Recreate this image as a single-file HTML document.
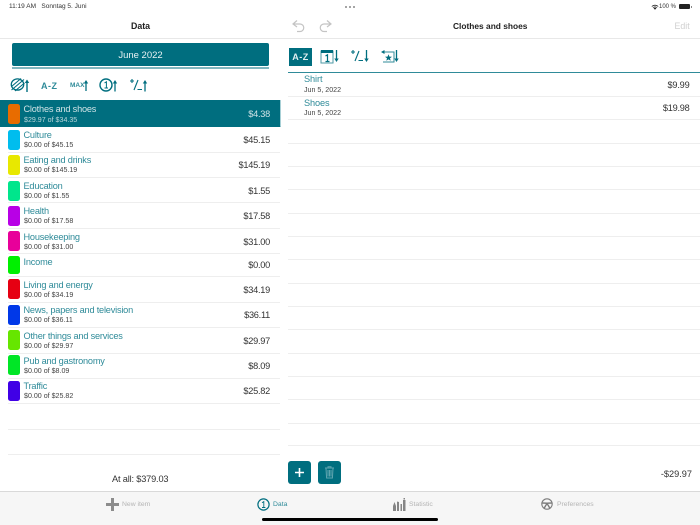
<!DOCTYPE html>
<html><head><meta charset="utf-8"><style>
html,body{margin:0;padding:0}
body{width:700px;height:525px;overflow:hidden;background:#fff;position:relative;font-family:"Liberation Sans",sans-serif;color:#333;filter:blur(.25px)}
.a{position:absolute;white-space:nowrap}
.l{position:absolute;height:1px;background:#eeeeee}
.sw{position:absolute;left:8px;width:12px;border-radius:2.5px}
.t{position:absolute;left:23.5px;font-size:9.2px;letter-spacing:-.2px;color:#2f8b99;white-space:nowrap;line-height:12px}
.s{position:absolute;left:24px;font-size:7.1px;color:#444;white-space:nowrap;line-height:9px}
.v{position:absolute;right:430px;font-size:9.2px;letter-spacing:-.25px;color:#333;white-space:nowrap;line-height:12px}
svg{position:absolute;overflow:visible}
</style></head><body>

<div class="a" style="left:9px;top:3px;font-size:6.5px;line-height:8px;color:#333">11:19 AM&nbsp;&nbsp; Sonntag 5. Juni</div>
<div class="a" style="left:345px;top:6px;width:2px;height:2px;background:#888;border-radius:50%;box-shadow:4px 0 #888,8px 0 #888"></div>
<svg style="left:650px;top:3px" width="10" height="8" viewBox="0 0 10 8"><path d="M5 6.8L3.6 5.3A2 2 0 0 1 6.4 5.3ZM2.7 4.4A3.4 3.4 0 0 1 7.3 4.4L6.8 4.9A2.8 2.8 0 0 0 3.2 4.9ZM1.5 3.2A5 5 0 0 1 8.5 3.2L7.9 3.8A4.2 4.2 0 0 0 2.1 3.8Z" fill="#222"/></svg>
<div class="a" style="left:659px;top:3px;font-size:6px;line-height:8px;color:#333">100 %</div>
<div class="a" style="left:679px;top:4px;width:11px;height:5px;background:#222;border-radius:1px"></div>
<div class="a" style="left:690.5px;top:5.5px;width:1px;height:2px;background:#888"></div>

<div class="a" style="left:131px;top:20px;font-size:8.8px;font-weight:bold;line-height:12px;color:#222">Data</div>
<div class="a" style="left:453px;top:20px;font-size:8.4px;font-weight:bold;line-height:12px;color:#222">Clothes and shoes</div>
<div class="a" style="left:674.5px;top:20px;font-size:8.8px;line-height:12px;color:#d0d0d0">Edit</div>
<svg style="left:291px;top:19px" width="14" height="14" viewBox="0 0 14 14" fill="none" stroke="#c4c4c4" stroke-width="1.2"><path d="M6 1.5L2 5L6 8M2 5H9A3.6 3.6 0 0 1 9 12.5H6"/></svg>
<svg style="left:319px;top:19px" width="14" height="14" viewBox="0 0 14 14" fill="none" stroke="#c4c4c4" stroke-width="1.2"><path d="M8 1.5L12 5L8 8M12 5H5A3.6 3.6 0 0 0 5 12.5H8"/></svg>
<div class="l" style="left:0;top:38px;width:700px;background:#e8e8e8"></div>

<div class="a" style="left:12px;top:43px;width:257px;height:23px;background:#006e7f;border-radius:2px;color:#e8f2f3;font-size:9.5px;line-height:25px;text-align:center">June 2022</div>
<div class="a" style="left:12px;top:66.5px;width:257px;height:2px;background:#7fb6bf"></div>

<svg style="left:10px;top:77px" width="20" height="16" viewBox="0 0 20 16" fill="none" stroke="#006e7f"><ellipse cx="7.5" cy="7.5" rx="6.2" ry="5.6" stroke-width="1.3"/><path d="M1.5 13L14 2.5M1.5 9.5L11 1.5M5 14L14.5 6" stroke-width="1.1"/><path d="M17 15V3.5" stroke-width="1.4"/><path d="M14.8 6L17 2.5L19.2 6Z" fill="#006e7f" stroke="none"/></svg>
<div class="a" style="left:41px;top:79.5px;font-size:9px;font-weight:bold;line-height:12px;color:#2f8b99;letter-spacing:.5px">A-Z</div>
<div class="a" style="left:70px;top:81.5px;font-size:6.5px;font-weight:bold;line-height:8px;color:#2f8b99">MAX</div>
<svg style="left:83px;top:79px" width="7" height="12" viewBox="0 0 7 12" stroke="#006e7f" fill="#006e7f"><path d="M3 12V3" stroke-width="1.3"/><path d="M.8 4.5L3 1L5.2 4.5Z" stroke="none"/></svg>
<svg style="left:99px;top:78px" width="21" height="14" viewBox="0 0 21 14" fill="none" stroke="#006e7f"><circle cx="7" cy="7" r="6" stroke-width="1.4"/><path d="M5.5 5L7.4 3.8V10M5.5 10H9" stroke-width="1"/><path d="M16 13.5V3.5" stroke-width="1.3"/><path d="M13.8 5.5L16 2L18.2 5.5Z" fill="#006e7f" stroke="none"/></svg>
<svg style="left:129px;top:78px" width="20" height="14" viewBox="0 0 20 14" fill="none" stroke="#006e7f" stroke-width="1.1"><path d="M1 3H5M3 1V5M5 12L9 2M8.5 11.5H13"/><path d="M16 13.5V3.5" stroke-width="1.3"/><path d="M13.8 5.5L16 2L18.2 5.5Z" fill="#006e7f" stroke="none"/></svg>

<div class="a" style="left:0;top:100px;width:280px;height:27px;background:#006e7f"></div>
<div class="a" style="left:280px;top:100px;width:1px;height:27px;background:#8fc0c8"></div>

<div class="sw" style="top:104px;height:20px;background:#e86c00"></div>
<div class="t" style="top:103px;color:#cfe3e6">Clothes and shoes</div>
<div class="s" style="top:115.5px;color:#b9d6da">$29.97 of $34.35</div>
<div class="v" style="top:108px;color:#cfe3e6">$4.38</div>

<div class="sw" style="top:129.5px;height:20px;background:#00bdee"></div>
<div class="t" style="top:128.5px">Culture</div>
<div class="s" style="top:140.5px">$0.00 of $45.15</div>
<div class="v" style="top:133.5px">$45.15</div>
<div class="l" style="left:8px;top:151.5px;width:272px"></div>

<div class="sw" style="top:155px;height:20px;background:#e8e800"></div>
<div class="t" style="top:154px">Eating and drinks</div>
<div class="s" style="top:166px">$0.00 of $145.19</div>
<div class="v" style="top:159px">$145.19</div>
<div class="l" style="left:8px;top:177px;width:272px"></div>

<div class="sw" style="top:180.5px;height:20px;background:#00e68c"></div>
<div class="t" style="top:179.5px">Education</div>
<div class="s" style="top:191.5px">$0.00 of $1.55</div>
<div class="v" style="top:185px">$1.55</div>
<div class="l" style="left:8px;top:202px;width:272px"></div>

<div class="sw" style="top:205.5px;height:20px;background:#b800e6"></div>
<div class="t" style="top:205px">Health</div>
<div class="s" style="top:217px">$0.00 of $17.58</div>
<div class="v" style="top:210px">$17.58</div>
<div class="l" style="left:8px;top:227.5px;width:272px"></div>

<div class="sw" style="top:231px;height:20px;background:#e8009a"></div>
<div class="t" style="top:230.5px">Housekeeping</div>
<div class="s" style="top:242.5px">$0.00 of $31.00</div>
<div class="v" style="top:235.5px">$31.00</div>
<div class="l" style="left:8px;top:253px;width:272px"></div>

<div class="sw" style="top:256px;height:18px;background:#00f000"></div>
<div class="t" style="top:255.5px">Income</div>
<div class="v" style="top:259px">$0.00</div>
<div class="l" style="left:8px;top:276px;width:272px"></div>

<div class="sw" style="top:279px;height:20px;background:#e60012"></div>
<div class="t" style="top:279px">Living and energy</div>
<div class="s" style="top:291px">$0.00 of $34.19</div>
<div class="v" style="top:283.5px">$34.19</div>
<div class="l" style="left:8px;top:301.5px;width:272px"></div>

<div class="sw" style="top:304.5px;height:20px;background:#0038e8"></div>
<div class="t" style="top:304px">News, papers and television</div>
<div class="s" style="top:316px">$0.00 of $36.11</div>
<div class="v" style="top:309px">$36.11</div>
<div class="l" style="left:8px;top:327px;width:272px"></div>

<div class="sw" style="top:330px;height:20px;background:#66e600"></div>
<div class="t" style="top:329.5px">Other things and services</div>
<div class="s" style="top:341.5px">$0.00 of $29.97</div>
<div class="v" style="top:334.5px">$29.97</div>
<div class="l" style="left:8px;top:352.5px;width:272px"></div>

<div class="sw" style="top:355px;height:20px;background:#00e626"></div>
<div class="t" style="top:355px">Pub and gastronomy</div>
<div class="s" style="top:367px">$0.00 of $8.09</div>
<div class="v" style="top:360px">$8.09</div>
<div class="l" style="left:8px;top:377.5px;width:272px"></div>

<div class="sw" style="top:380.5px;height:20px;background:#4000e6"></div>
<div class="t" style="top:380px">Traffic</div>
<div class="s" style="top:392px">$0.00 of $25.82</div>
<div class="v" style="top:385px">$25.82</div>
<div class="l" style="left:8px;top:403px;width:272px"></div>
<div class="l" style="left:8px;top:428.5px;width:272px"></div>
<div class="l" style="left:8px;top:453.5px;width:272px"></div>

<div class="a" style="left:112px;top:472.5px;font-size:9.2px;letter-spacing:-.16px;line-height:12px;color:#333">At all: $379.03</div>

<div class="a" style="left:288px;top:72px;width:412px;height:1px;background:#2f8b99"></div>
<div class="a" style="left:280px;top:100px;width:1px;height:26px;background:#a8d0d6"></div>
<div class="a" style="left:289px;top:47.5px;width:23px;height:18px;background:#006e7f;color:#dfeef0;font-size:9px;font-weight:bold;line-height:19px;text-align:center;letter-spacing:.5px">A-Z</div>
<svg style="left:320px;top:49px" width="20" height="15" viewBox="0 0 20 15" fill="none"><rect x="1" y="2" width="12" height="12" stroke="#4d9aa6"/><rect x="1" y="1" width="12" height="3" fill="#006e7f"/><path d="M5.5 7L7.5 5.8V12.5M5.5 12.5H9.5" stroke="#006e7f" stroke-width="1.2"/><path d="M16.5 1V11" stroke="#006e7f" stroke-width="1.3"/><path d="M14.3 9.5L16.5 13L18.7 9.5Z" fill="#006e7f"/></svg>
<svg style="left:350px;top:49px" width="20" height="15" viewBox="0 0 20 15" fill="none" stroke="#006e7f" stroke-width="1.1"><path d="M1 3H5M3 1V5M5 12L9 2M8.5 11.5H13"/><path d="M16.5 1V11" stroke-width="1.3"/><path d="M14.3 9.5L16.5 13L18.7 9.5Z" fill="#006e7f" stroke="none"/></svg>
<svg style="left:380px;top:49px" width="20" height="15" viewBox="0 0 20 15" fill="none" stroke="#2f8b99"><path d="M4 3H14V13H3"/><path d="M1 3L4.5 1V5Z" fill="#006e7f" stroke="none"/><path d="M8.5 5.2L9.4 7.6L12 7.7L10 9.3L10.7 11.8L8.5 10.4L6.3 11.8L7 9.3L5 7.7L7.6 7.6Z" fill="#006e7f" stroke="none"/><path d="M16.5 1V11" stroke="#006e7f" stroke-width="1.3"/><path d="M14.3 9.5L16.5 13L18.7 9.5Z" fill="#006e7f" stroke="none"/></svg>

<div class="a" style="left:304px;top:73px;font-size:9.2px;letter-spacing:-.1px;line-height:12px;color:#2f8b99">Shirt</div>
<div class="a" style="left:304px;top:85.5px;font-size:7.1px;line-height:9px;color:#444">Jun 5, 2022</div>
<div class="a" style="right:10.5px;top:78.5px;font-size:9.2px;letter-spacing:-.2px;line-height:12px">$9.99</div>
<div class="a" style="left:304px;top:96.5px;font-size:9.2px;letter-spacing:-.1px;line-height:12px;color:#2f8b99">Shoes</div>
<div class="a" style="left:304px;top:109px;font-size:7.1px;line-height:9px;color:#444">Jun 5, 2022</div>
<div class="a" style="right:10.5px;top:102px;font-size:9.2px;letter-spacing:-.25px;line-height:12px">$19.98</div>

<div class="l" style="left:288px;top:96px;width:412px"></div>
<div class="l" style="left:288px;top:119px;width:412px"></div>
<div class="l" style="left:288px;top:142.5px;width:412px"></div>
<div class="l" style="left:288px;top:166px;width:412px"></div>
<div class="l" style="left:288px;top:189px;width:412px"></div>
<div class="l" style="left:288px;top:212.5px;width:412px"></div>
<div class="l" style="left:288px;top:236px;width:412px"></div>
<div class="l" style="left:288px;top:259px;width:412px"></div>
<div class="l" style="left:288px;top:282.5px;width:412px"></div>
<div class="l" style="left:288px;top:306px;width:412px"></div>
<div class="l" style="left:288px;top:329px;width:412px"></div>
<div class="l" style="left:288px;top:352.5px;width:412px"></div>
<div class="l" style="left:288px;top:376px;width:412px"></div>
<div class="l" style="left:288px;top:399px;width:412px"></div>
<div class="l" style="left:288px;top:422.5px;width:412px"></div>
<div class="l" style="left:288px;top:445px;width:412px"></div>

<div class="a" style="left:288px;top:460.5px;width:23px;height:23px;background:#006e7f;border-radius:3px"></div>
<svg style="left:288px;top:460.5px" width="23" height="23" viewBox="0 0 23 23"><path d="M11.5 7V16M7 11.5H16" stroke="#fff" stroke-width="1.6"/></svg>
<div class="a" style="left:317.5px;top:460.5px;width:23px;height:23px;background:#006e7f;border-radius:3px"></div>
<svg style="left:317.5px;top:460.5px" width="23" height="23" viewBox="0 0 23 23" fill="none" stroke="#5fa5b0"><path d="M7 7H16M10 7V5.8H13V7M8 7.5L8.6 17H14.4L15 7.5M10 9V15.5M11.5 9V15.5M13 9V15.5"/></svg>
<div class="a" style="right:8px;top:468px;font-size:9.2px;line-height:12px">-$29.97</div>

<div class="a" style="left:0;top:491px;width:700px;height:34px;background:#f6f6f6;border-top:1px solid #d9d9d9;box-sizing:border-box"></div>
<svg style="left:106px;top:498px" width="13" height="13" viewBox="0 0 13 13"><path d="M6.5 0V13M0 6.5H13" stroke="#8c8c8c" stroke-width="3"/></svg>
<div class="a" style="left:122px;top:500px;font-size:6.8px;line-height:10px;color:#b4b4b4">New item</div>
<svg style="left:257px;top:498px" width="13" height="13" viewBox="0 0 13 13" fill="none" stroke="#006e7f"><circle cx="6.5" cy="6.5" r="5.6" stroke-width="1.2"/><path d="M5 4.8L6.8 3.6V9.5M5 9.5H8.4" stroke-width=".9"/></svg>
<div class="a" style="left:273px;top:500px;font-size:6.8px;line-height:10px;color:#2f8b99">Data</div>
<svg style="left:393px;top:498px" width="13" height="13" viewBox="0 0 13 13" fill="#858585"><path d="M0 13V8L1.5 4L3 8V13ZM4 13V3.5L6 4V13ZM7.5 13V6H9V13ZM10 13V2H12.5V13ZM10.5 0H12V1.5H10.5Z"/></svg>
<div class="a" style="left:409px;top:500px;font-size:6.8px;line-height:10px;color:#b4b4b4">Statistic</div>
<svg style="left:541px;top:498px" width="12" height="12" viewBox="0 0 12 12" fill="none" stroke="#7c7c7c"><circle cx="6" cy="6" r="5.2" stroke-width="1.1"/><circle cx="6" cy="6" r="1.4" fill="#7c7c7c" stroke="none"/><path d="M1 5L6 5.2L11 5M5 7L3 10.5M7 7L9 10.5" stroke-width="1.4"/></svg>
<div class="a" style="left:557px;top:500px;font-size:6.8px;line-height:10px;color:#b4b4b4">Preferences</div>
<div class="a" style="left:262px;top:518px;width:176px;height:3px;background:#000;border-radius:2px"></div>
</body></html>
